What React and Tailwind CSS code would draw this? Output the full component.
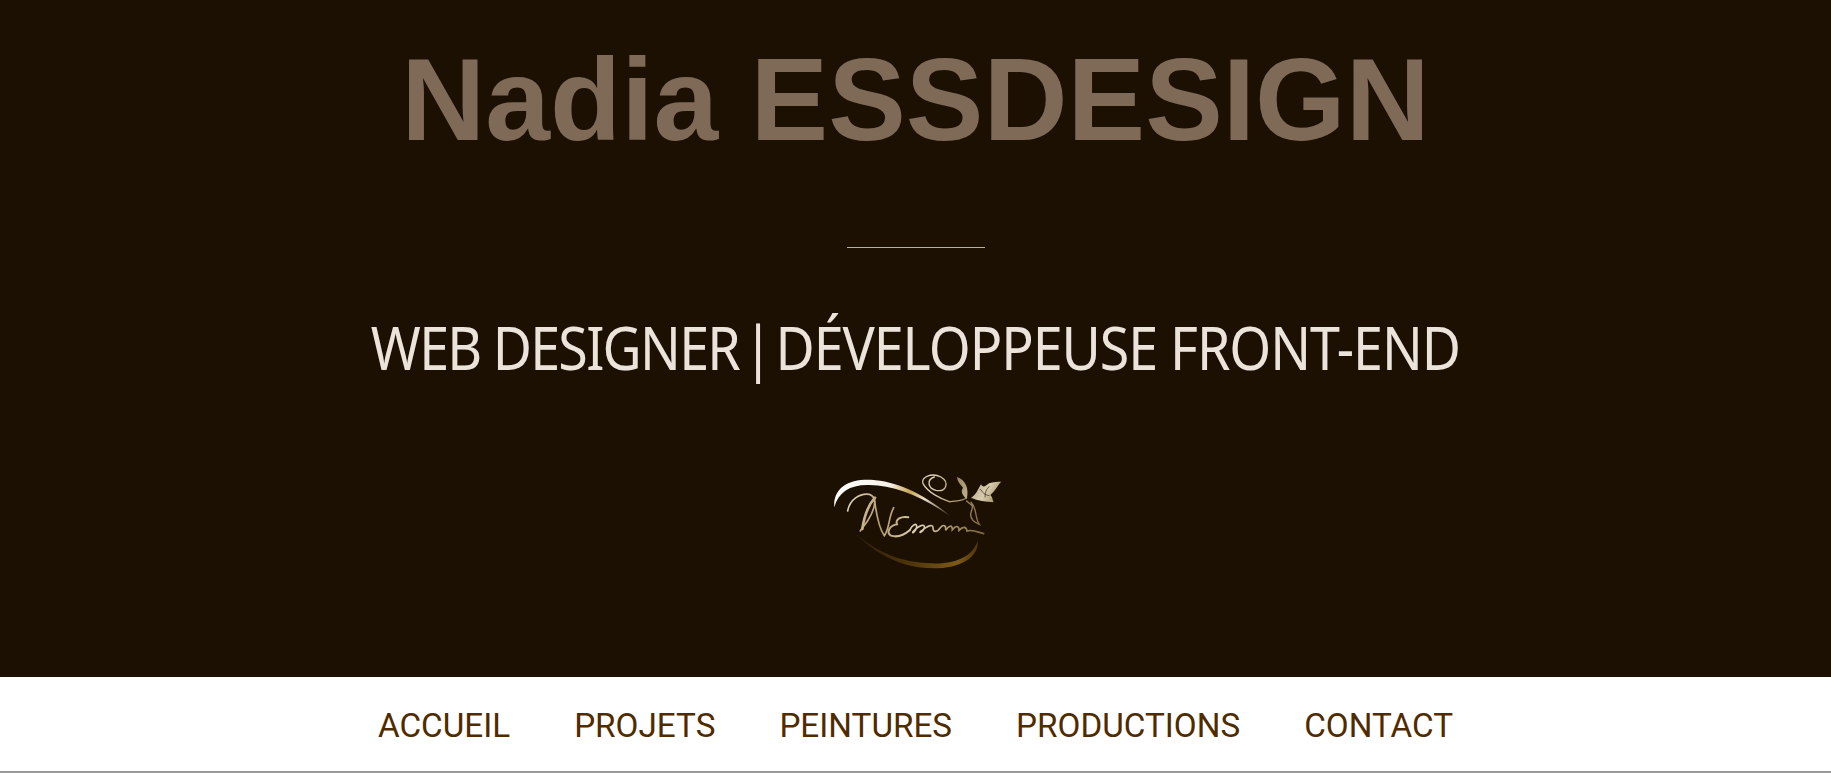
import React from "react";

function Logo() {
  return (
    <svg width="230" height="140" viewBox="0 0 690 420" fill="none" aria-label="Logo N Essaouu">
      <defs>
        <linearGradient id="sw" x1="100" y1="100" x2="450" y2="200" gradientUnits="userSpaceOnUse">
          <stop offset="0" stopColor="#fff" />
          <stop offset="0.45" stopColor="#f6f1e6" />
          <stop offset="0.62" stopColor="#c9a45a" />
          <stop offset="0.75" stopColor="#e9e0cc" />
          <stop offset="1" stopColor="#4a3a20" />
        </linearGradient>
        <linearGradient id="bt" x1="160" y1="250" x2="530" y2="330" gradientUnits="userSpaceOnUse">
          <stop offset="0" stopColor="#2c1c06" />
          <stop offset="0.5" stopColor="#4f350c" />
          <stop offset="0.85" stopColor="#7d5a16" />
          <stop offset="1" stopColor="#4a3208" />
        </linearGradient>
        <linearGradient id="gd" x1="130" y1="130" x2="550" y2="260" gradientUnits="userSpaceOnUse">
          <stop offset="0" stopColor="#e4dcc8" />
          <stop offset="0.3" stopColor="#b39a68" />
          <stop offset="0.55" stopColor="#e0d5bb" />
          <stop offset="0.8" stopColor="#a08a5c" />
          <stop offset="1" stopColor="#7a6438" />
        </linearGradient>
        <linearGradient id="lf" x1="470" y1="90" x2="600" y2="170" gradientUnits="userSpaceOnUse">
          <stop offset="0" stopColor="#9d8a62" />
          <stop offset="0.6" stopColor="#d8ccb0" />
          <stop offset="1" stopColor="#8c7546" />
        </linearGradient>
      </defs>
      <path d="M100 175C96 130 125 96 190 92C270 90 360 125 448 202C360 140 280 110 205 108C150 106 112 128 100 175Z" fill="url(#sw)" />
      <path d="M160 250C230 312 300 340 390 343C460 345 515 325 530 275C534 325 480 358 395 358C300 358 215 310 160 250Z" fill="url(#bt)" />
      <g stroke="url(#gd)" strokeLinecap="round" fill="none">
        <path d="M140 186C146 152 176 132 205 136C232 144 220 185 200 215C190 230 180 240 178 246" strokeWidth="5" />
        <path d="M222 146C200 170 190 200 184 240" strokeWidth="8" />
        <path d="M220 148C225 190 232 235 250 260C266 238 262 205 278 176" strokeWidth="5" />
        <path d="M322 205C300 200 282 212 288 226C266 230 254 250 270 260C290 266 312 256 326 244" strokeWidth="6" />
        <path d="M326 244C334 226 348 220 347 234C345 250 328 256 338 246C355 230 372 222 370 236C366 250 350 254 361 246C378 230 396 224 396 236C396 252 408 250 418 236C428 224 436 230 434 244C444 230 454 226 454 242C464 230 474 228 474 244C486 232 496 232 498 246C514 240 532 250 548 254" strokeWidth="5" />
        <path d="M445 158C420 150 380 130 366 104C358 84 392 70 420 84C446 100 436 130 405 124C380 118 376 92 400 84" strokeWidth="4" />
        <path d="M445 158C465 156 485 156 497 146" strokeWidth="4" />
        <path d="M497 156C510 170 520 165 510 190C505 210 520 220 535 226C520 205 530 180 510 160" strokeWidth="4" />
      </g>
      <path d="M468 84C492 92 506 118 497 150C484 138 478 128 486 116C478 106 470 100 468 84Z" fill="url(#lf)" />
      <path d="M510 146C526 138 530 122 540 106C546 116 552 114 564 103C578 98 590 98 601 98C590 108 584 124 568 138C576 146 574 152 578 160C555 158 530 155 510 146Z" fill="url(#lf)" />
      <path d="M538 120C545 132 552 138 565 140M565 112C555 122 552 130 552 145" stroke="#2a1b08" strokeWidth="2" />
    </svg>
  );
}

export default function App() {
  const links = ["ACCUEIL", "PROJETS", "PEINTURES", "PRODUCTIONS", "CONTACT"];
  return (
    <div className="min-h-[773px] bg-white">
      <header className="h-[677px] bg-[#1c1003] flex flex-col items-center pt-[36px]">
        <h1 className="font-['Liberation_Sans',sans-serif] font-bold text-[116.4px] leading-[128px] text-[#7f6a58] m-0 whitespace-nowrap">
          Nadia ESSDESIGN
        </h1>
        <div className="w-[138px] h-px bg-[#b9b1a6] mt-[83px]" />
        <h2 className="font-['Noto_Sans',sans-serif] font-normal text-[61px] leading-[80px] tracking-[-2px] scale-x-[0.882] text-[#ece4da] mt-[59px] whitespace-pre">
          WEB DESIGNER<span className="[word-spacing:-9px]"> | </span><span className="tracking-[-1.2px]">DÉVELOPPEUSE FRONT-END</span>
        </h2>
        <div className="mt-[62px]">
          <Logo />
        </div>
      </header>
      <nav className="h-[96px] bg-white border-b-2 border-[#999999] flex items-center justify-center gap-[64px] font-['Roboto',sans-serif] text-[33.25px] text-[#4f2b00] pt-[4px]">
        {links.map((l) => (
          <a key={l} className="whitespace-nowrap">{l}</a>
        ))}
      </nav>
    </div>
  );
}
